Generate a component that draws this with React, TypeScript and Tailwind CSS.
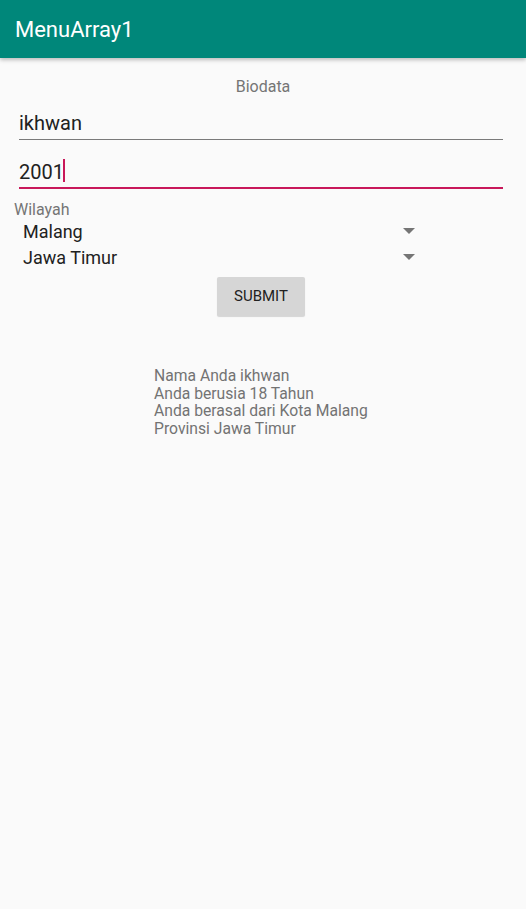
const Arrow = () => (
  <svg width="12" height="6" viewBox="0 0 12 6" className="mr-[111px]">
    <path d="M0 0 L12 0 L6 6 Z" fill="#757575" />
  </svg>
);

const Spinner = ({ value }: { value: string }) => (
  <div className="flex h-[26px] items-center justify-between pl-[23px]">
    <span className="text-[18px] text-[#212121]">{value}</span>
    <Arrow />
  </div>
);

const App = () => {
  return (
    <div
      className="flex min-h-[909px] w-[526px] flex-col bg-[#fafafa]"
      style={{ fontFamily: "Roboto, 'Liberation Sans', sans-serif" }}
    >
      {/* Toolbar */}
      <div className="relative z-10 flex h-[58px] items-center bg-[#00877a] px-[15px] shadow-[0_2px_4px_rgba(0,0,0,0.25)]">
        <span className="text-[22px] text-white">MenuArray1</span>
      </div>

      {/* Form */}
      <div className="flex flex-col">
        <div className="mt-[20px] text-center text-[16px] leading-[18px] text-[#757575]">Biodata</div>

        <div className="ml-[19px] mr-[23px] mt-[12px] flex h-[32px] items-end border-b border-[#7a7a7a] pb-[4px]">
          <span className="text-[20px] leading-[24px] text-[#212121]">ikhwan</span>
        </div>

        <div className="ml-[19px] mr-[23px] mt-[16px] flex h-[33px] items-end border-b-2 border-[#c8185a] pb-[3px]">
          <span className="text-[20px] leading-[24px] text-[#212121]">2001</span>
          <span className="mb-[2px] ml-[-1px] h-[23px] w-[2px] bg-[#c8185a]" />
        </div>

        <div className="ml-[14px] mt-[12px] text-[16px] leading-[17px] text-[#757575]">Wilayah</div>
        <Spinner value="Malang" />
        <Spinner value="Jawa Timur" />

        <div className="mt-[7px] flex justify-center">
          <button className="mr-[4px] h-[39px] w-[88px] rounded-[2px] bg-[#d6d6d6] text-[15px] text-[#212121] shadow-[0_1px_1px_rgba(0,0,0,0.15)]">
            SUBMIT
          </button>
        </div>

        <div className="ml-[154px] mt-[51px] text-[15.7px] leading-[17.6px] text-[#737373]">
          <div>Nama Anda ikhwan</div>
          <div>Anda berusia 18 Tahun</div>
          <div>Anda berasal dari Kota Malang</div>
          <div>Provinsi Jawa Timur</div>
        </div>
      </div>
    </div>
  );
};

export default App;
